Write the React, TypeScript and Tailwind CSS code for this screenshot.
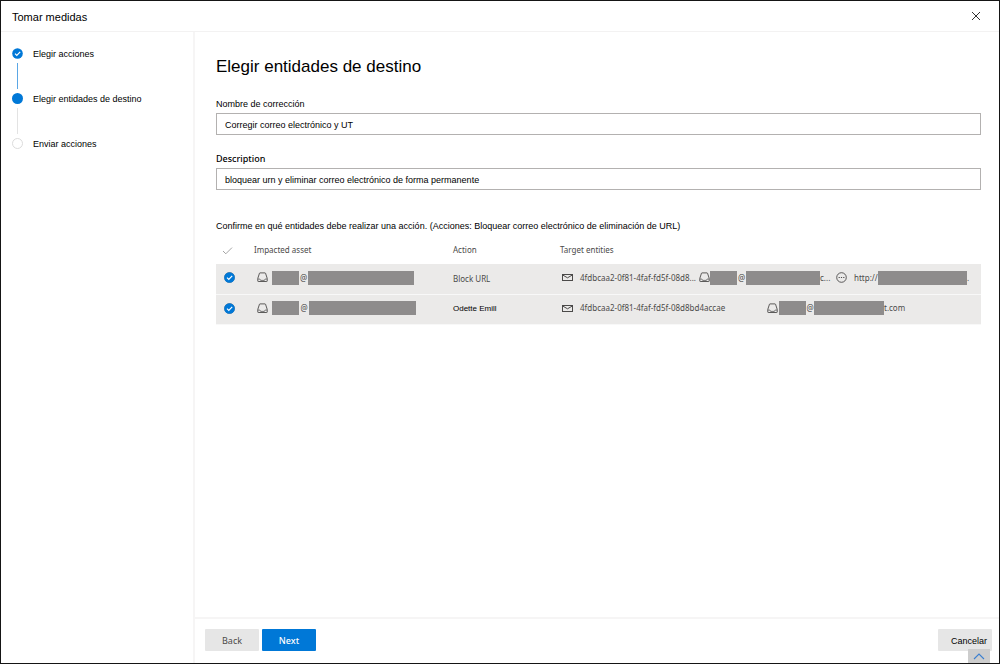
import React from 'react';

const sans = "font-['Liberation_Sans',Arial,sans-serif]";
const noto = "font-['Noto_Sans','Open_Sans',sans-serif]";

function InboxIcon() {
  return (
    <svg viewBox="0 0 11 11" className="h-[11px] w-[11px] shrink-0" fill="none" stroke="#5c5b5a" strokeWidth="1" aria-hidden="true">
      <path d="M0.8 6.3 L2.5 1.2 Q2.6 0.9 3 0.9 H8 Q8.4 0.9 8.5 1.2 L10.2 6.3 V9.1 Q10.2 9.5 9.8 9.5 H1.2 Q0.8 9.5 0.8 9.1 Z" />
      <path d="M0.8 7 H2.8 L3.6 8.4 H7.4 L8.2 7 H10.2" strokeWidth="0.8" />
    </svg>
  );
}

function MailIcon() {
  return (
    <svg viewBox="0 0 11 9" className="h-[9px] w-[11px] shrink-0" fill="none" stroke="#4b4a49" strokeWidth="1" aria-hidden="true">
      <rect x="0.5" y="1.5" width="10" height="6" />
      <path d="M0.7 2 L5.5 4.8 L10.3 2" />
    </svg>
  );
}

function MoreIcon() {
  return (
    <svg viewBox="0 0 11 11" className="h-[11px] w-[11px] shrink-0" fill="none" stroke="#4b4a49" aria-hidden="true">
      <circle cx="5.5" cy="5.5" r="4.8" strokeWidth="0.9" />
      <path d="M2.6 5.5 h1.2 M4.9 5.5 h1.2 M7.2 5.5 h1.2" strokeWidth="1.2" />
    </svg>
  );
}

function CheckDot() {
  return (
    <svg viewBox="0 0 11 11" className="h-[11px] w-[11px] shrink-0" fill="none" aria-hidden="true">
      <circle cx="5.5" cy="5.5" r="5.3" fill="#0078d7" />
      <path d="M3 5.6 L4.8 7.4 L8.2 3.9" stroke="#fff" strokeWidth="1.2" />
    </svg>
  );
}

function RowCheck({ label }: { label: string }) {
  return (
    <label className="relative ml-2 block h-[11px] w-[11px]">
      <input type="checkbox" defaultChecked aria-label={label} className="peer block h-[11px] w-[11px] appearance-none rounded-full border border-[#8a8886]" />
      <span className="pointer-events-none absolute inset-0 hidden peer-checked:block">
        <CheckDot />
      </span>
    </label>
  );
}

function Masked({ width }: { width: string }) {
  return <span className={`h-3.5 shrink-0 bg-[#8e8c8c] ${width}`} />;
}

function Step({ label, state }: { label: string; state: 'done' | 'current' | 'next' }) {
  return (
    <li className="flex gap-[10px]" aria-current={state === 'current' ? 'step' : undefined}>
      <div className="flex w-[11px] flex-col items-center">
        {state === 'done' && <CheckDot />}
        {state === 'current' && <span className="h-[11px] w-[11px] rounded-full bg-[#0078d7]" />}
        {state === 'next' && <span className="h-[11px] w-[11px] rounded-full border border-[#dcdcdc]" />}
        {state === 'done' && <span className="my-1 h-[26px] w-px bg-[#5ba7e5]" />}
        {state === 'current' && <span className="my-1 h-[26px] w-px bg-[#e3e3e3]" />}
      </div>
      <span className="text-[9px] leading-3 text-black">{label}</span>
    </li>
  );
}

function Field({ id, label, value, labelClass }: { id: string; label: string; value: string; labelClass: string }) {
  return (
    <div>
      <label htmlFor={id} className={`block text-[9px] leading-3 ${labelClass}`}>{label}</label>
      <input id={id} defaultValue={value} className="mt-[3px] block h-[22px] w-full border border-[#b3b1b0] px-2 pt-0.5 text-[9px] text-black" />
    </div>
  );
}

export default function App() {
  return (
    <div className={`flex min-h-screen flex-col border border-[#151515] bg-white text-black ${sans}`}>
      <header className="flex h-[31px] shrink-0 items-center justify-between border-b border-[#f3f2f2] pr-[18px] pl-[11px]">
        <h1 className="pt-0.5 text-[11px] leading-4">Tomar medidas</h1>
        <button type="button" aria-label="Cerrar" className="h-[10px] w-[10px]">
          <svg viewBox="0 0 10 10" className="h-[10px] w-[10px]" stroke="#333" strokeWidth="1" aria-hidden="true">
            <path d="M1 1 L9 9 M9 1 L1 9" />
          </svg>
        </button>
      </header>

      <div className="flex grow">
        <nav aria-label="Pasos" className="w-[194px] shrink-0 border-r-2 border-[#f6f5f5] pt-4 pl-[11px]">
          <ol className="flex flex-col">
            <Step label="Elegir acciones" state="done" />
            <Step label="Elegir entidades de destino" state="current" />
            <Step label="Enviar acciones" state="next" />
          </ol>
        </nav>

        <div className="flex min-w-0 grow flex-col">
          <main className="grow pt-[23px] pr-[18px] pl-[21px]">
            <h2 className="text-[17px] leading-6">Elegir entidades de destino</h2>

            <div className="mt-[19px] flex flex-col gap-[18px]">
              <Field id="name" label="Nombre de corrección" value="Corregir correo electrónico y UT" labelClass="" />
              <Field id="desc" label="Description" value="bloquear urn y eliminar correo electrónico de forma permanente" labelClass={`${noto} font-medium`} />
            </div>

            <p className="mt-[30px] text-[9px] leading-3">
              Confirme en qué entidades debe realizar una acción. (Acciones: Bloquear correo electrónico de eliminación de URL)
            </p>

            <table className={`w-full table-fixed border-collapse text-[8px] leading-3 text-[#4b4a49] ${noto}`}>
              <thead>
                <tr className="h-8 text-left">
                  <th className="w-[38px] pt-1">
                    <svg viewBox="0 0 11 11" className="ml-1.5 h-[11px] w-[11px]" fill="none" stroke="#999" strokeWidth="0.9" role="img" aria-label="Seleccionar">
                      <path d="M1 6 L3.8 8.8 L10 2.6" />
                    </svg>
                  </th>
                  <th className="w-[199px] pt-1 font-normal">Impacted asset</th>
                  <th className="w-[107px] pt-1 font-normal">Action</th>
                  <th className="pt-1 font-normal">Target entities</th>
                </tr>
              </thead>
              <tbody>
                <tr className="h-[30px] border-b border-[#f8f8f8] bg-[#ebeae9]">
                  <td className="pb-0.5"><RowCheck label="Block URL" /></td>
                  <td className="pb-0.5">
                    <div className="flex items-center pl-[3px]">
                      <InboxIcon />
                      <span className="w-1" />
                      <Masked width="w-[27px]" />
                      <span className="w-[9px] text-center">@</span>
                      <Masked width="w-[106px]" />
                    </div>
                  </td>
                  <td>Block URL</td>
                  <td className="pb-0.5">
                    <div className="flex items-center whitespace-nowrap pl-0.5">
                      <MailIcon />
                      <span className="w-[126px] pl-[7px]">4fdbcaa2-0f81-4faf-fd5f-08d8...</span>
                      <InboxIcon />
                      <Masked width="w-[27px]" />
                      <span className="w-[9px] text-center">@</span>
                      <Masked width="w-[74px]" />
                      <span className="w-4">c...</span>
                      <MoreIcon />
                      <span className="w-[31px] pl-[7px]">http://</span>
                      <Masked width="w-[89px]" />
                      <span>.</span>
                    </div>
                  </td>
                </tr>
                <tr className="h-[30px] border-b border-[#f8f8f8] bg-[#ebeae9]">
                  <td className="pb-0.5"><RowCheck label="Odette Emill" /></td>
                  <td className="pb-0.5">
                    <div className="flex items-center pl-[3px]">
                      <InboxIcon />
                      <span className="w-1" />
                      <Masked width="w-[27px]" />
                      <span className="w-[10px] text-center">@</span>
                      <Masked width="w-[107px]" />
                    </div>
                  </td>
                  <td className={`text-black ${sans}`}>Odette Emill</td>
                  <td className="pb-0.5">
                    <div className="flex items-center whitespace-nowrap pl-0.5">
                      <MailIcon />
                      <span className="w-[194px] pl-[7px]">4fdbcaa2-0f81-4faf-fd5f-08d8bd4accae</span>
                      <InboxIcon />
                      <span className="w-px" />
                      <Masked width="w-[27px]" />
                      <span className="w-[8px] text-center">@</span>
                      <Masked width="w-[70px]" />
                      <span>t.com</span>
                    </div>
                  </td>
                </tr>
              </tbody>
            </table>
          </main>

          <footer className="relative flex h-[46px] shrink-0 items-start gap-[3px] border-t-2 border-[#f6f5f5] pt-[10px] pr-[7px] pl-[10px]">
            <button type="button" className={`h-[22px] w-[54px] rounded-[1px] bg-[#e6e6e6] pt-0.5 text-[9px] text-[#4b4a49] ${noto}`}>Back</button>
            <button type="button" className={`h-[22px] w-[54px] rounded-[1px] bg-[#0078d7] pt-0.5 text-[9px] font-medium text-white ${noto}`}>Next</button>
            <button type="button" className="ml-auto h-[22px] w-[54px] rounded-[1px] bg-[#e6e6e6] pt-1 pl-2 text-[9px]">Cancelar</button>
            <button type="button" aria-label="Subir" className="absolute right-[9px] bottom-0 flex h-3.5 w-[22px] items-center justify-center bg-[#cdcdcd]">
              <svg viewBox="0 0 12 7" className="h-[7px] w-3" fill="none" stroke="#3b7fd0" strokeWidth="1.1" aria-hidden="true">
                <path d="M1 6 L6 1 L11 6" />
              </svg>
            </button>
          </footer>
        </div>
      </div>
    </div>
  );
}
